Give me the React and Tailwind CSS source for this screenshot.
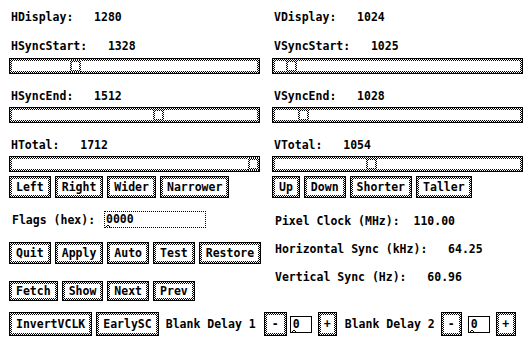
import React from "react";

const stip =
  "bg-[image:conic-gradient(#000_25%,#fff_0_50%,#000_0_75%,#fff_0)] bg-size-[2px_2px]";

function Btn({ children, className = "" }) {
  return (
    <div className={`border border-black p-[2px] ${stip} ${className}`}>
      <div className="bg-white h-full px-[4px] flex items-center justify-center whitespace-pre">
        {children}
      </div>
    </div>
  );
}

function Label({ children, className = "" }) {
  return (
    <div className={`h-[12px] pl-[2px] whitespace-pre ${className}`}>{children}</div>
  );
}

function Scroll({ pos, className = "" }) {
  return (
    <div className={`relative h-[16px] border border-black p-[2px] ${stip} ${className}`}>
      <div className="h-full bg-white" />
      <div
        className={`absolute top-[1px] h-[12px] w-[11px] p-[2px] ${stip}`}
        style={{ left: pos }}
      >
        <div className="h-full w-full bg-white" />
      </div>
    </div>
  );
}

function Caret() {
  return (
    <svg
      className="absolute left-[0px] bottom-[-1px]"
      width="6"
      height="4"
      viewBox="0 0 6 4"
    >
      <path d="M0.5 3.5 L3 1 L5.5 3.5" fill="none" stroke="#000" strokeWidth="1" />
    </svg>
  );
}

function SmallInput() {
  return (
    <div className="relative h-[17px] w-[22px] border border-black bg-white pl-[2px] leading-[15px]">
      0
      <Caret />
    </div>
  );
}

export default function App() {
  return (
    <div className="w-[532px] h-[343px] bg-white text-black overflow-hidden font-['DejaVu_Sans_Mono',monospace] font-bold text-[11.5px] leading-[12px]">
      <div className="flex px-[9px] gap-x-[12px]">
        {/* Left column */}
        <div className="flex flex-col w-[251px]">
          <Label className="mt-[11px]">HDisplay:   1280</Label>
          <Label className="mt-[17px]">HSyncStart:   1328</Label>
          <Scroll className="mt-[6px]" pos={60} />
          <Label className="mt-[16px]">HSyncEnd:   1512</Label>
          <Scroll className="mt-[5px]" pos={143} />
          <Label className="mt-[16px]">HTotal:   1712</Label>
          <Scroll className="mt-[5px]" pos={238} />
          <div className="flex gap-x-[4px] mt-[4px] h-[22px]">
            <Btn>Left</Btn>
            <Btn>Right</Btn>
            <Btn>Wider</Btn>
            <Btn>Narrower</Btn>
          </div>
          <div className="flex items-center mt-[13px] h-[17px]">
            <span className="pl-[3px] whitespace-pre">Flags (hex): </span>
            <div className="relative ml-[2px] h-[17px] w-[102px] border border-dotted border-black bg-white pl-[1px] leading-[15px]">
              0000
              <Caret />
            </div>
          </div>
          <div className="flex gap-x-[4px] mt-[14px] h-[22px]">
            <Btn>Quit</Btn>
            <Btn>Apply</Btn>
            <Btn>Auto</Btn>
            <Btn>Test</Btn>
            <Btn>Restore</Btn>
          </div>
          <div className="flex gap-x-[4px] mt-[17px] h-[20px]">
            <Btn>Fetch</Btn>
            <Btn>Show</Btn>
            <Btn>Next</Btn>
            <Btn>Prev</Btn>
          </div>
        </div>
        {/* Right column */}
        <div className="flex flex-col w-[252px]">
          <Label className="mt-[11px]">VDisplay:   1024</Label>
          <Label className="mt-[17px]">VSyncStart:   1025</Label>
          <Scroll className="mt-[6px]" pos={13} />
          <Label className="mt-[16px]">VSyncEnd:   1028</Label>
          <Scroll className="mt-[5px]" pos={25} />
          <Label className="mt-[16px]">VTotal:   1054</Label>
          <Scroll className="mt-[5px]" pos={93} />
          <div className="flex gap-x-[4px] mt-[4px] h-[22px]">
            <Btn>Up</Btn>
            <Btn>Down</Btn>
            <Btn>Shorter</Btn>
            <Btn>Taller</Btn>
          </div>
          <Label className="mt-[17px] pl-[3px]">Pixel Clock (MHz):  110.00</Label>
          <Label className="mt-[16px] pl-[3px]">Horizontal Sync (kHz):   64.25</Label>
          <Label className="mt-[16px] pl-[3px]">Vertical Sync (Hz):   60.96</Label>
        </div>
      </div>
      {/* Bottom row */}
      <div className="flex items-center px-[9px] mt-[11px] h-[24px]">
        <Btn className="h-[24px]">InvertVCLK</Btn>
        <Btn className="h-[24px] ml-[4px]">EarlySC</Btn>
        <span className="ml-[7px] whitespace-pre">Blank Delay 1</span>
        <Btn className="h-[24px] ml-[8px] w-[23px]">-</Btn>
        <div className="ml-[3px]"><SmallInput /></div>
        <Btn className="h-[24px] ml-[6px] w-[19px]">+</Btn>
        <span className="ml-[8px] whitespace-pre">Blank Delay 2</span>
        <Btn className="h-[24px] ml-[6px] w-[21px]">-</Btn>
        <div className="ml-[6px]"><SmallInput /></div>
        <Btn className="h-[24px] ml-[6px] w-[20px]">+</Btn>
      </div>
    </div>
  );
}
